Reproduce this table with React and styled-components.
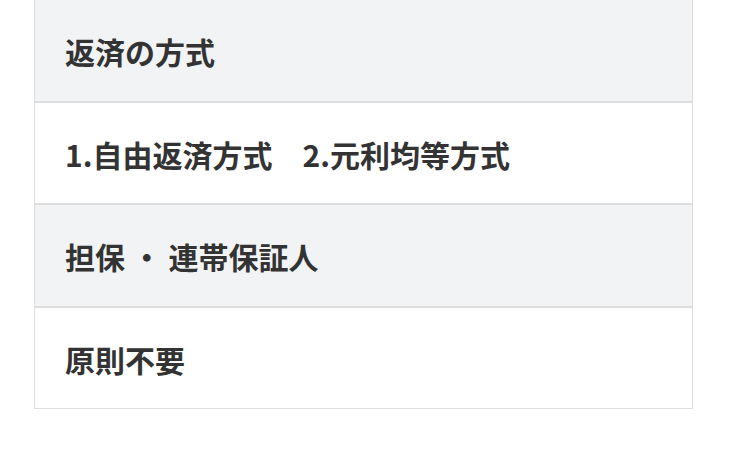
import styled, { createGlobalStyle } from "styled-components";

const GlobalStyle = createGlobalStyle`
  html, body {
    margin: 0;
    padding: 0;
    background: #fff;
  }
  body {
    font-family: "Noto Sans CJK JP", "Noto Sans", sans-serif;
    color: #333;
  }
`;

const Table = styled.dl`
  margin: -1px 0 0 34px;
  width: 659px;
  padding: 0;
`;

const Cell = styled.div`
  box-sizing: border-box;
  margin: 0;
  padding: 34px 30px 31px;
  border: 1px solid #dedede;
  background: ${({ $head }) => ($head ? "#f2f3f5" : "#fff")};
  font-size: 30px;
  font-weight: 700;
  line-height: 35.5px;
  white-space: nowrap;
`;

const rows = [
  { head: "返済の方式", body: "1.自由返済方式　2.元利均等方式" },
  { head: "担保 ・ 連帯保証人", body: "原則不要" },
];

export default function App() {
  return (
    <>
      <GlobalStyle />
      <Table>
        {rows.map((r) => (
          <div key={r.head}>
            <Cell as="dt" $head>
              {r.head}
            </Cell>
            <Cell as="dd">{r.body}</Cell>
          </div>
        ))}
      </Table>
    </>
  );
}
